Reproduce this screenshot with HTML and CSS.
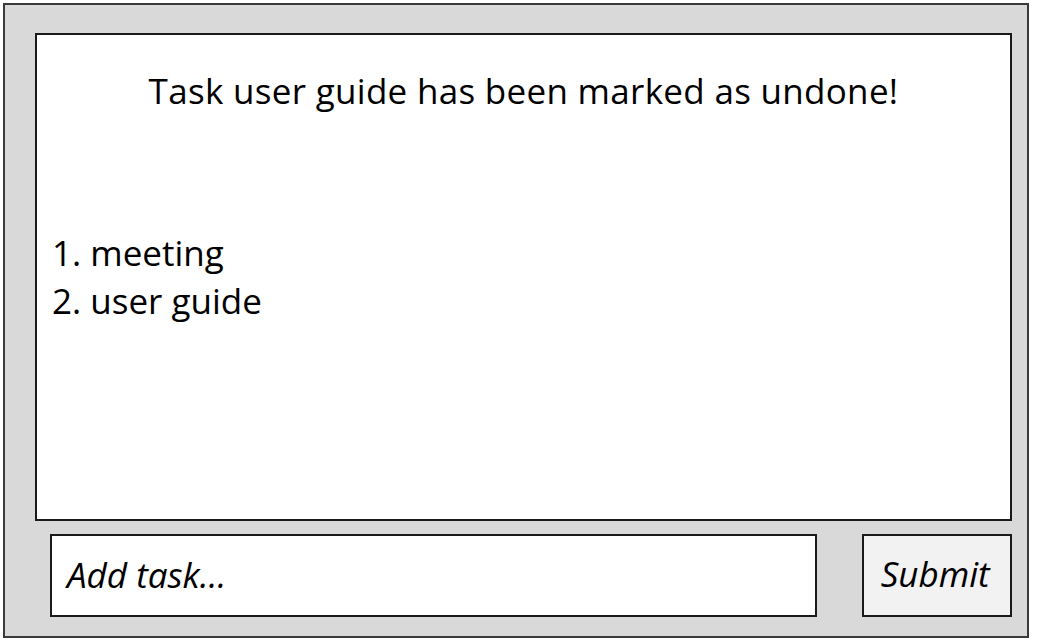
FILE: index.html
```html
<!DOCTYPE html>
<html>
<head>
<meta charset="utf-8">
<link rel="stylesheet" href="styles.css">
</head>
<body>
<div class="frame">
  <div class="panel">
    <div class="message">Task user guide has been marked as undone!</div>
    <div class="list">
      <div class="item">1. meeting</div>
      <div class="item">2. user guide</div>
    </div>
  </div>
  <div class="controls">
    <div class="input">Add task…</div>
    <div class="button">Submit</div>
  </div>
</div>
</body>
</html>
```
FILE: styles.css
```css
html, body {
  margin: 0;
  padding: 0;
  background: #ffffff;
}
body {
  font-family: "Open Sans", Lato, sans-serif;
  color: #000;
}
.frame {
  box-sizing: border-box;
  margin: 3px 0 0 3px;
  width: 1026px;
  height: 635px;
  background: #d9d9d9;
  border: 2px solid #3a3a3a;
  padding: 28px 15px 19px 30px;
  display: flex;
  flex-direction: column;
}
.panel {
  box-sizing: border-box;
  height: 490px;
  background: #fff;
  border: 2px solid #1a1a1a;
  padding: 36px 0 0 15px;
  display: flex;
  flex-direction: column;
}
.message {
  font-size: 35px;
  line-height: 40px;
  text-align: center;
  letter-spacing: 0.3px;
  margin-right: 15px;
}
.list {
  margin-top: 118px;
  font-size: 35px;
  line-height: 48px;
}
.controls {
  display: flex;
  margin-top: 13px;
  margin-left: 15px;
  gap: 45px;
}
.input {
  box-sizing: border-box;
  width: 768px;
  height: 83px;
  background: #fff;
  border: 2px solid #1a1a1a;
  font-style: italic;
  font-size: 35px;
  line-height: 78px;
  padding-left: 15px;
}
.button {
  box-sizing: border-box;
  width: 150px;
  height: 83px;
  background: #f2f2f2;
  border: 2px solid #1a1a1a;
  font-style: italic;
  font-size: 35px;
  line-height: 76px;
  text-align: center;
  padding-right: 4px;
}
```
